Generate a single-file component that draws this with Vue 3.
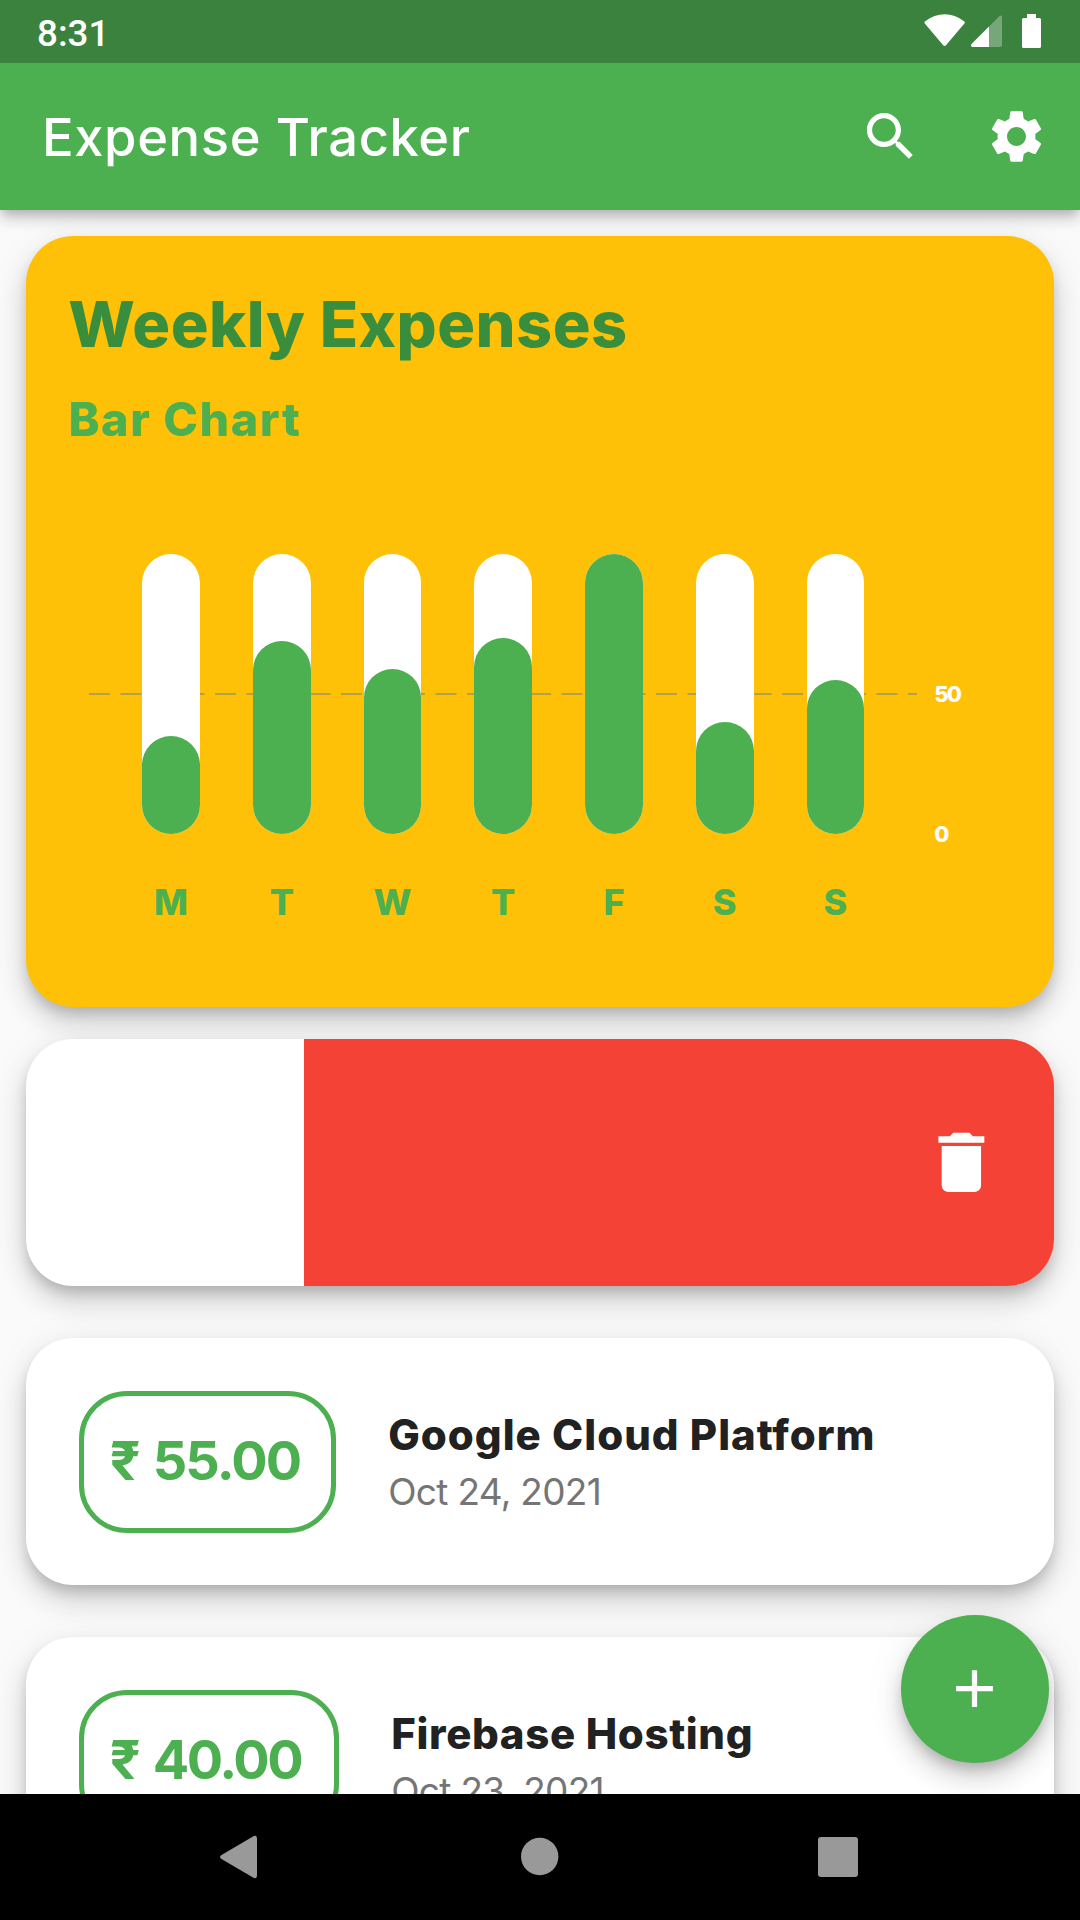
<script setup>
const days = [
  { label: 'M', value: 35 },
  { label: 'T', value: 69 },
  { label: 'W', value: 59 },
  { label: 'T', value: 70 },
  { label: 'F', value: 100 },
  { label: 'S', value: 40 },
  { label: 'S', value: 55 },
]
const expenses = [
  { amount: '55.00', title: 'Google Cloud Platform', date: 'Oct 24, 2021', kind: 'cloud' },
  { amount: '40.00', title: 'Firebase Hosting', date: 'Oct 23, 2021', kind: 'hosting' },
]
</script>

<template>
  <div class="screen">
    <header class="top">
      <div class="status">
        <span class="clock">8:31</span>
        <svg class="status-icons" width="118" height="63" viewBox="924 0 118 63">
          <path fill="#fff" d="M924.8 23.5Q923.8 22.2 925.2 21.2C937 11.8 952.500 11.800 964 21.200Q965.400 22.200 964.400 23.500L946 45.200Q944.600 46.800 943.200 45.200Z" />
          <path fill="#fff" opacity=".3" d="M989 26.500L998.500 17Q1002 13.800 1002 17.500V45Q1002 47 1000 47H989Z" />
          <path fill="#fff" d="M989 26.500V47H973Q970 47 971.500 44Z" />
          <path fill="#fff" d="M1027 14H1036V18H1039.500Q1041 18 1041 19.500V46.500Q1041 48 1039.500 48H1023.500Q1022 48 1022 46.500V19.500Q1022 18 1023.500 18H1027Z" />
        </svg>
      </div>
      <div class="appbar">
        <h1>Expense Tracker</h1>
        <svg class="icon" viewBox="0 0 24 24"><path d="M15.5 14h-.79l-.28-.27C15.410 12.590 16 11.110 16 9.500 16 5.910 13.090 3 9.500 3S3 5.910 3 9.500 5.910 16 9.500 16c1.610 0 3.090-.59 4.230-1.570l.27.28v.79l5 4.990L20.490 19l-4.990-5zm-6 0C7.010 14 5 11.990 5 9.500S7.010 5 9.500 5 14 7.010 14 9.500 11.990 14 9.500 14z" /></svg>
        <svg class="icon" viewBox="0 0 24 24"><path d="M19.140,12.940c0.040-0.300,0.060-0.610,0.060-0.940c0-0.320-0.020-0.640-0.070-0.940l2.030-1.580c0.180-0.140,0.230-0.410,0.120-0.610l-1.920-3.320c-0.120-0.220-0.370-0.290-0.590-0.220l-2.390,0.960c-0.500-0.380-1.030-0.700-1.620-0.940L14.400,2.810c-0.040-0.240-0.240-0.410-0.480-0.410h-3.840c-0.240,0-0.430,0.170-0.470,0.410L9.250,5.350C8.660,5.590,8.120,5.920,7.630,6.290L5.240,5.330c-0.220-0.080-0.470,0-0.590,0.220L2.740,8.870C2.620,9.080,2.660,9.340,2.860,9.480l2.030,1.580C4.840,11.360,4.800,11.690,4.800,12s0.020,0.640,0.070,0.940l-2.030,1.580c-0.180,0.140-0.230,0.410-0.120,0.610l1.920,3.320c0.120,0.220,0.370,0.290,0.590,0.220l2.390-0.960c0.500,0.380,1.030,0.700,1.620,0.940l0.360,2.540c0.050,0.240,0.240,0.410,0.480,0.410h3.840c0.240,0,0.440-0.170,0.470-0.410l0.360-2.540c0.590-0.240,1.130-0.560,1.620-0.940l2.390,0.960c0.220,0.080,0.470,0,0.590-0.220l1.920-3.320c0.120-0.220,0.070-0.470-0.120-0.610L19.140,12.940zM12,15.600c-1.980,0-3.600-1.620-3.600-3.600s1.620-3.600,3.600-3.600s3.600,1.620,3.600,3.600S13.980,15.600,12,15.600z" /></svg>
      </div>
    </header>

    <main class="content">
      <section class="card chart-card">
        <h2>Weekly Expenses</h2>
        <h3>Bar Chart</h3>
        <div class="chart">
          <div class="plot">
            <svg class="grid" width="828" height="2" viewBox="0 0 828 2">
              <line x1="0" y1="1" x2="828" y2="1" stroke="#b3a04a" stroke-width="2" stroke-dasharray="21 10.500" />
            </svg>
            <div v-for="(d, i) in days" :key="i" class="bar">
              <div class="fill" :style="{ height: d.value + '%' }"></div>
            </div>
          </div>
          <div class="axis"><span>50</span><span>0</span></div>
        </div>
        <div class="days">
          <span v-for="(d, i) in days" :key="i">{{ d.label }}</span>
        </div>
      </section>

      <section class="card swipe">
        <div class="danger">
          <svg class="trash" viewBox="0 0 24 24"><path d="M6 19c0 1.100.9 2 2 2h8c1.100 0 2-.9 2-2V7H6v12zM19 4h-3.500l-1-1h-5l-1 1H5v2h14V4z" /></svg>
        </div>
      </section>

      <section v-for="e in expenses" :key="e.title" class="card expense" :class="e.kind">
        <div class="amount"><span class="rupee">₹</span><span class="num">{{ e.amount }}</span></div>
        <div class="info">
          <div class="title">{{ e.title }}</div>
          <div class="date">{{ e.date }}</div>
        </div>
      </section>

      <button class="fab" aria-label="Add">
        <svg class="icon" viewBox="0 0 24 24"><path d="M19 13h-6v6h-2v-6H5v-2h6V5h2v6h6v2z" /></svg>
      </button>
    </main>

    <nav class="nav">
      <svg width="44" height="44" viewBox="0 0 44 44"><path fill="#999" d="M36 1.500Q40 -0.500 40 3.500V40.500Q40 44.500 36 42.500L4.500 24Q1.500 22 4.500 20Z" /></svg>
      <svg width="44" height="44" viewBox="0 0 44 44"><circle cx="22.700" cy="21.500" r="18.700" fill="#999" /></svg>
      <svg width="44" height="44" viewBox="0 0 44 44"><rect x="2" y="2" width="40" height="40" rx="3" fill="#999" /></svg>
    </nav>
  </div>
</template>

<style>
body { margin: 0; }
</style>

<style scoped>
.screen {
  width: 1080px;
  height: 1920px;
  display: flex;
  flex-direction: column;
  overflow: hidden;
  background: #fafafa;
  font-family: Inter, "Open Sans", sans-serif;
}
h1, h2, h3 { margin: 0; white-space: nowrap; }
.top {
  position: relative;
  z-index: 2;
  flex: none;
  box-shadow: 0 5px 10px -3px rgba(0, 0, 0, .2), 0 10px 13px rgba(0, 0, 0, .14), 0 3px 26px rgba(0, 0, 0, .03);
}
.status {
  height: 63px;
  background: #3b823e;
  display: flex;
  justify-content: space-between;
  padding: 0 38px 0 37px;
}
.clock {
  font: 500 36.750px/59px Roboto, sans-serif;
  padding-top: 4px;
  color: #fff;
}
.appbar {
  height: 147px;
  background: #4caf50;
  display: flex;
  align-items: center;
  padding: 0 31.750px 0 42px;
}
.appbar h1 {
  flex: 1;
  font-size: 52.500px;
  font-weight: 500;
  letter-spacing: .6px;
  line-height: 146px;
  color: #fff;
}
.icon { width: 63px; height: 63px; fill: #fff; display: block; }
.appbar .icon + .icon { margin-left: 63px; }
.content {
  position: relative;
  flex: none;
  height: 1584px;
  overflow: hidden;
  padding: 26.250px 26.250px 0;
  box-sizing: border-box;
}
.card {
  border-radius: 47.250px;
  background: #fff;
  box-sizing: border-box;
  box-shadow: 0 8px 13px -2.600px rgba(0, 0, 0, .17), 0 16px 28px rgba(0, 0, 0, .15), 0 3px 44px rgba(0, 0, 0, .05);
}
.chart-card {
  height: 770.750px;
  background: #ffc107;
  padding-top: 41px;
}
.chart-card h2 {
  margin-left: 42px;
  font-size: 63px;
  font-weight: 800;
  letter-spacing: .5px;
  line-height: 94px;
  color: #388e3c;
}
.chart-card h3 {
  margin: 14px 0 0 42px;
  font-size: 46.500px;
  font-weight: 800;
  letter-spacing: 1.700px;
  line-height: 68px;
  color: #4caf50;
}
.chart { display: flex; margin: 100.750px 0 0 63px; }
.plot {
  position: relative;
  width: 828px;
  height: 280px;
  display: flex;
  justify-content: space-evenly;
}
.grid { position: absolute; left: 0; top: 139px; }
.bar {
  position: relative;
  width: 57.750px;
  border-radius: 29px;
  background: #fff;
  display: flex;
  align-items: flex-end;
}
.fill { width: 100%; border-radius: 29px; background: #4caf50; }
.axis {
  margin: 125px 0 -15px 17px;
  display: flex;
  flex-direction: column;
  justify-content: space-between;
  font-size: 22px;
  font-weight: 800;
  letter-spacing: -1.800px;
  line-height: 30px;
  color: #fff;
}
.days {
  width: 828px;
  margin: 42.500px 0 0 63px;
  display: flex;
  justify-content: space-evenly;
  font-size: 36px;
  font-weight: 800;
  line-height: 50px;
  color: #4caf50;
}
.days span { width: 57.750px; text-align: center; }
.swipe {
  height: 247px;
  margin-top: 32px;
  display: flex;
  justify-content: flex-end;
  overflow: hidden;
}
.danger {
  width: 749.750px;
  background: #f44336;
  display: flex;
  align-items: center;
  justify-content: flex-end;
  padding-right: 52.750px;
  box-sizing: border-box;
}
.trash { width: 78.750px; height: 78.750px; fill: #fff; }
.expense {
  height: 247px;
  margin-top: 52px;
  padding: 52.500px;
  display: flex;
  align-items: flex-start;
}
.amount {
  width: 257px;
  height: 142px;
  border: 5.250px solid #4caf50;
  border-radius: 48px;
  box-sizing: border-box;
  display: flex;
  font-size: 54px;
  font-weight: 750;
  line-height: 130px;
  color: #4caf50;
  white-space: nowrap;
}
.hosting .amount { width: 260px; }
.rupee { width: 43px; margin-left: 26px; }
.num { letter-spacing: -1.900px; }
.hosting .num { letter-spacing: -2.400px; }
.info { margin-left: 52.500px; padding-top: 14px; white-space: nowrap; }
.title { font-size: 42px; font-weight: 800; letter-spacing: 1px; line-height: 60px; color: #212121; }
.hosting .title { letter-spacing: .65px; }
.date { font-size: 37px; font-weight: 370; letter-spacing: -.7px; line-height: 54px; color: #757575; }
.fab {
  position: absolute;
  right: 31.500px;
  bottom: 31.500px;
  width: 147.500px;
  height: 147.500px;
  border: 0;
  border-radius: 50%;
  background: #4caf50;
  display: flex;
  align-items: center;
  justify-content: center;
  box-shadow: 0 8px 13px -2.600px rgba(0, 0, 0, .2), 0 16px 26px rgba(0, 0, 0, .14), 0 3px 47px rgba(0, 0, 0, .06);
}
.nav {
  flex: none;
  height: 126px;
  background: #000;
  position: relative;
  z-index: 3;
  display: flex;
  justify-content: space-between;
  align-items: center;
  padding: 0 220px 0 217px;
}
</style>
